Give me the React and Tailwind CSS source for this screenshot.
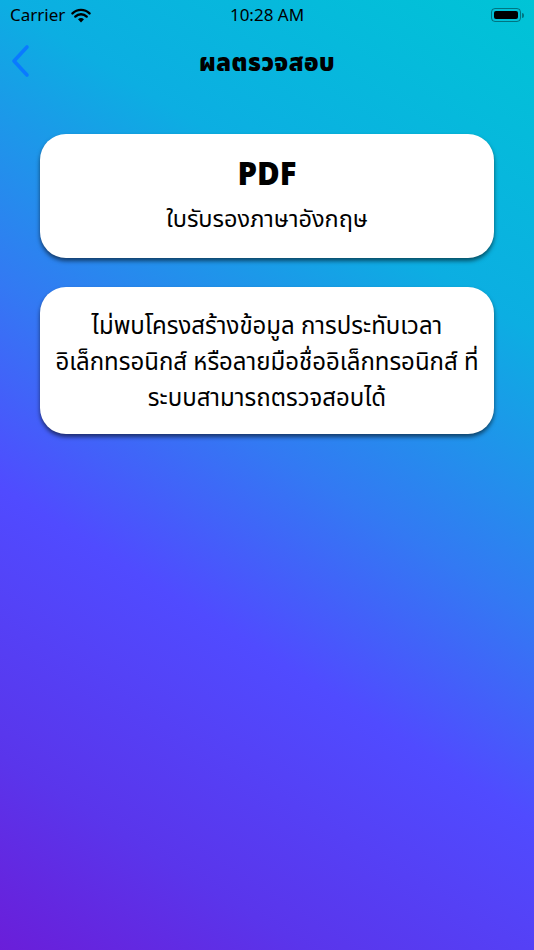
const StatusBar = () => (
  <div className="relative flex h-[30px] items-center justify-between px-[10px] text-[17px] text-black">
    <div className="flex items-center gap-[6px]">
      <span>Carrier</span>
      <svg width="20" height="15" viewBox="0 0 20 15">
        <path d="M10 14.5 L7 11.2 A4.6 4.6 0 0 1 13 11.2 Z" fill="black" />
        <path d="M4.3 8.6 A8 8 0 0 1 15.7 8.6" stroke="black" strokeWidth="2.4" fill="none" strokeLinecap="round" />
        <path d="M1.5 5.4 A12 12 0 0 1 18.5 5.4" stroke="black" strokeWidth="2.4" fill="none" strokeLinecap="round" />
      </svg>
    </div>
    <span className="absolute left-1/2 -translate-x-1/2">10:28 AM</span>
    <div className="flex items-center">
      <div className="flex h-[14px] w-[30px] items-center rounded-[4px] border border-black/40 p-[2px]">
        <div className="h-full w-full rounded-[2px] bg-black" />
      </div>
      <div className="ml-[1px] h-[5px] w-[2px] rounded-r-sm bg-black/40" />
    </div>
  </div>
);

const Card = ({ children, className = "" }) => (
  <div
    className={`flex flex-col items-center justify-center rounded-[26px] bg-white text-center text-black shadow-[0_3px_4px_rgba(0,0,0,0.55)] ${className}`}
  >
    {children}
  </div>
);

export default function App() {
  return (
    <div
      className="h-[950px] w-full overflow-hidden bg-[linear-gradient(212deg,#00c4d6_0%,#0caee2_26%,#3379f3_48%,#504bff_64%,#5a35eb_85%,#6a1ed9_100%)]"
      style={{ fontFamily: '"Noto Sans", "Noto Sans Thai", "DejaVu Sans", sans-serif' }}
    >
      <StatusBar />

      {/* nav */}
      <div className="relative flex h-[64px] items-center justify-center">
        <svg className="absolute left-[10px] top-[14px]" width="22" height="34" viewBox="0 0 22 34">
          <path d="M17 3 L4 17 L17 31" stroke="#0a7aff" strokeWidth="3.6" fill="none" strokeLinecap="round" strokeLinejoin="round" />
        </svg>
        <h1 className="text-[24px] font-black tracking-[0.5px]">ผลตรวจสอบ</h1>
      </div>

      <div className="mt-[40px] flex flex-col gap-[29px] px-[40px]">
        <Card className="h-[124px] gap-[14px] pb-[2px]">
          <p className="text-[31px] font-black leading-none">PDF</p>
          <p className="text-[23.5px] leading-[30px]">ใบรับรองภาษาอังกฤษ</p>
        </Card>
        <Card className="h-[147px] px-[8px]">
          <p className="text-[24px] leading-[36px]">
            ไม่พบโครงสร้างข้อมูล การประทับเวลา
            <br />
            อิเล็กทรอนิกส์ หรือลายมือชื่ออิเล็กทรอนิกส์ ที่
            <br />
            ระบบสามารถตรวจสอบได้
          </p>
        </Card>
      </div>
    </div>
  );
}
